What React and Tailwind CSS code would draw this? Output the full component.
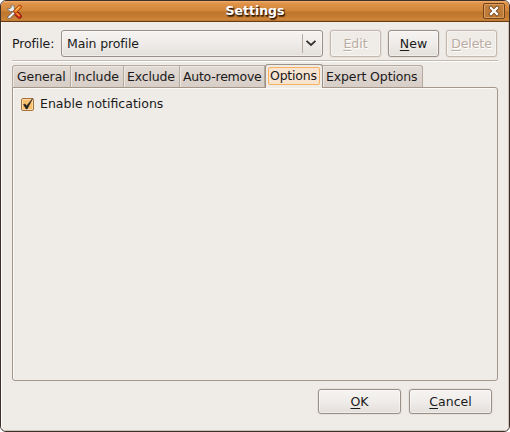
import React from "react";

function Button({ label, className = "", disabled = false }) {
  const tone = disabled
    ? "border-[#c5b8ad] text-[#b9aca2] bg-[#efebe7] [text-shadow:1px_1px_0_#fff]"
    : "border-[#99908a] text-[#1a1a1a] bg-linear-to-b from-[#f6f4f2] via-[#efecea] to-[#e3dfda]";
  return (
    <button
      disabled={disabled}
      className={`flex shrink-0 items-center justify-center rounded-[3px] border shadow-[inset_0_0_0_1px_rgba(255,255,255,0.45),0_0_0_1px_rgba(225,218,212,0.6)] ${tone} ${className}`}
    >
      <span className="whitespace-pre leading-4">
        <span className="underline decoration-1 underline-offset-2">{label[0]}</span>
        {label.slice(1)}
      </span>
    </button>
  );
}

function Tab({ label, className }) {
  return (
    <div
      className={`flex h-[22px] shrink-0 items-center border-t border-r border-[#b5a99f] bg-linear-to-b from-[#e2dad4] to-[#d7cec7] shadow-[inset_1px_1px_0_#eee8e3] ${className}`}
    >
      <span className="whitespace-nowrap">{label}</span>
    </div>
  );
}

function ToolsIcon() {
  return (
    <svg width="16" height="16" viewBox="0 0 16 16" className="shrink-0 translate-y-px">
      <path d="m8 8 4.4 4.2" stroke="#7d1a0c" strokeWidth="5" strokeLinecap="round" />
      <path d="m8.4 8.4 4 3.8" stroke="#d92a1c" strokeWidth="3.4" strokeLinecap="round" />
      <path d="M.8 4.2 3 4.6 4.4 3.2 3.8 1C6.2.6 8 2.8 7.4 5.2L9.2 7 7.2 9 5.2 7.4C3 8 .6 6.4.8 4.2Z" fill="#eeeeec" stroke="#77706a" strokeWidth=".9" />
      <path d="M2.2 13.2 7.8 7.8" stroke="#6b6259" strokeWidth="3.4" strokeLinecap="round" />
      <path d="M2.2 13.2 7.8 7.8" stroke="#f5f5f3" strokeWidth="2" strokeLinecap="round" />
      <path d="M8.2 7.4 12.8 2.8" stroke="#a3390d" strokeWidth="4" strokeLinecap="round" />
      <path d="M8.5 7.1 12.7 2.9" stroke="#f6902c" strokeWidth="2.6" strokeLinecap="round" />
      <path d="m9.6 5.4 2.4-2.4" stroke="#fcc982" strokeWidth="1" strokeLinecap="round" />
      <path d="m9.5 9.1 3 2.8" stroke="#f5b032" strokeWidth="1.3" />
    </svg>
  );
}

function TitleBar() {
  return (
    <div className="flex h-[21px] shrink-0 items-center border-b border-[#6b3c12] bg-[linear-gradient(to_bottom,#f0b071_0px,#e19449_2px,#d08539_10px,#bd742c_11px,#c77e34_17px,#d18a3e_18px,#b87432_20px)] pr-[4px] pl-[6px]">
      <ToolsIcon />
      <div className="flex-1 pl-[4px] text-center font-bold text-white [text-shadow:1px_1px_1px_#2e1807,1px_2px_1px_#5a3411]">
        <span>Settings</span>
      </div>
      <div className="flex h-[16px] w-[22px] items-center justify-center rounded-[2px] border border-[#71431b] bg-linear-to-b from-[#c4813f] to-[#bd7835] shadow-[inset_0_0_0_1px_#db9c5d]">
        <svg width="12" height="12" viewBox="0 0 12 12">
          <path d="m3 3 6 6m0-6-6 6" stroke="#633915" strokeWidth="3.8" strokeLinecap="square" />
          <path d="m3 3 6 6m0-6-6 6" stroke="#fff" strokeWidth="2.4" strokeLinecap="square" />
        </svg>
      </div>
    </div>
  );
}

export default function App() {
  return (
    <div className="h-[432px] w-[510px] overflow-hidden bg-white font-['DejaVu_Sans',sans-serif] text-[12.5px] leading-4 text-[#1a1a1a]">
      <div className="flex h-[432px] w-[510px] flex-col overflow-hidden rounded-[6px] border border-[#3d3029] bg-[#efebe7]">
        <TitleBar />
        <main className="flex flex-1 flex-col border-r border-b border-[#c9c0b8] pl-[11px] shadow-[inset_1px_0_0_#fff]">
          <div className="mt-[8px] flex h-[27px] items-center">
            <span className="w-[49px] shrink-0 tracking-[-0.1px]">Profile:</span>
            <div className="flex h-[27px] w-[262px] shrink-0 items-center rounded-[3px] border border-[#99908a] bg-linear-to-b from-[#f6f4f2] via-[#efecea] to-[#e3dfda] shadow-[inset_0_0_0_1px_rgba(255,255,255,0.45)]">
              <span className="flex-1 pl-[5px] tracking-[-0.12px]">Main profile</span>
              <span className="flex h-[19px] w-[20px] items-center border-l border-[#b5aaa1] pl-[2px]">
                <svg width="12" height="8" viewBox="0 0 12 8" fill="none" className="-translate-y-px">
                  <path d="m1.5 1.8 4.5 4.2 4.5-4.2" stroke="#333" strokeWidth="1.8" />
                </svg>
              </span>
            </div>
            <Button label="Edit" disabled className="ml-[7px] h-[27px] w-[51px]" />
            <Button label="New" className="ml-[7px] h-[27px] w-[51px]" />
            <Button label="Delete" disabled className="ml-[7px] h-[27px] w-[51px] tracking-[-0.1px]" />
          </div>
          <div className="mt-[3px] h-[2px] w-[486px] border-t border-[#c5b8ad] bg-white" />
          <div className="mt-[2px] flex h-[23px] items-end">
            <Tab label="General" className="w-[59px] rounded-tl-[3px] border-l pl-[4px] tracking-[-0.1px]" />
            <Tab label="Include" className="w-[53px] pl-[3px] tracking-[-0.1px]" />
            <Tab label="Exclude" className="w-[56px] pl-[3px] tracking-[-0.18px]" />
            <Tab label="Auto-remove" className="w-[85px] pl-[3px] tracking-[-0.25px]" />
            <div className="z-10 -mb-px flex h-[24px] w-[58px] shrink-0 items-start rounded-t-[3px] border-x border-t border-[#9d9086] bg-[#efebe7] px-[2px] pt-[2px]">
              <div className="flex h-[18px] w-full items-center rounded-[2px] border border-[#fbb05c] bg-[#f7e4d1] pl-px">
                <span className="tracking-[-0.2px]">Options</span>
              </div>
            </div>
            <Tab label="Expert Options" className="w-[100px] rounded-tr-[3px] pl-[3px] tracking-[-0.12px]" />
          </div>
          <section className="h-[294px] w-[486px] rounded-r-[3px] rounded-bl-[3px] border border-[#a5968a] pt-[8px] pl-[8px] shadow-[inset_1px_1px_0_#fbf9f7]">
            <label className="flex items-center">
              <svg width="13" height="13" viewBox="0 0 13 13" className="mt-px shrink-0 overflow-visible">
                <rect x=".5" y=".5" width="12" height="12" rx="1.5" fill="#fbc06c" stroke="#a87238" />
                <rect x="1.5" y="1.5" width="10" height="10" rx=".5" fill="none" stroke="#fdd9a5" />
                <path d="M2.5 6.5 4.3 6 5.6 8 11.6.5 6.2 11H5.2Z" fill="#222" stroke="#222" strokeWidth=".5" />
              </svg>
              <span className="ml-[6px]">Enable notifications</span>
            </label>
          </section>
          <div className="mt-[8px] flex justify-end gap-[8px] pr-[16px]">
            <Button label="OK" className="h-[25px] w-[83px]" />
            <Button label="Cancel" className="h-[25px] w-[83px]" />
          </div>
        </main>
      </div>
    </div>
  );
}
